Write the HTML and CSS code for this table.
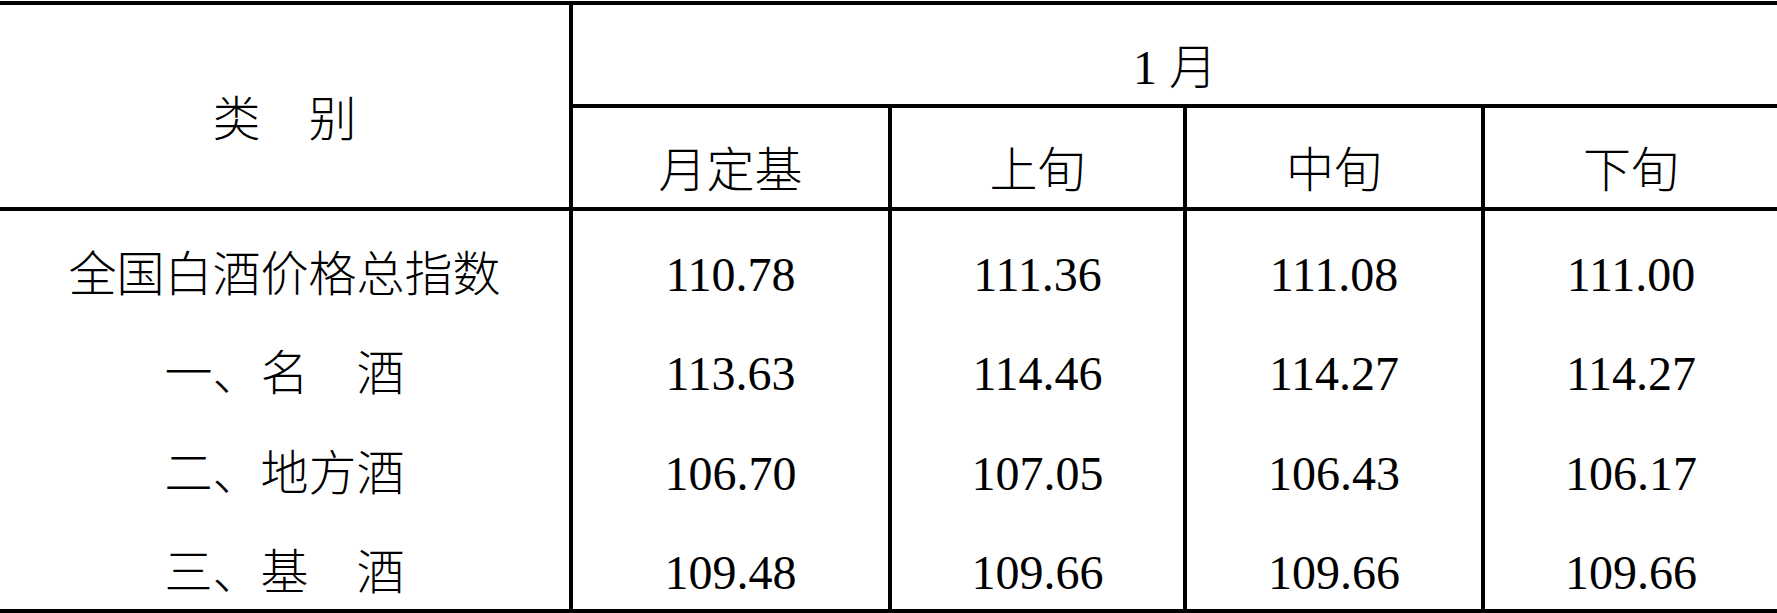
FILE: index.html
```html
<!DOCTYPE html>
<html lang="zh-CN">
<head>
<meta charset="utf-8">
<title>全国白酒价格指数</title>
<link rel="stylesheet" href="styles.css">
</head>
<body>
<table class="idx">
  <colgroup>
    <col class="c1"><col class="c2"><col class="c3"><col class="c4"><col class="c5">
  </colgroup>
  <thead>
    <tr class="h1">
      <th class="cat vr" rowspan="2">类　别</th>
      <th class="month" colspan="4">1 月</th>
    </tr>
    <tr class="h2">
      <th class="sub vr">月定基</th>
      <th class="sub vr">上旬</th>
      <th class="sub vr">中旬</th>
      <th class="sub">下旬</th>
    </tr>
  </thead>
  <tbody>
    <tr>
      <td class="lbl vr">全国白酒价格总指数</td>
      <td class="num vr">110.78</td>
      <td class="num vr">111.36</td>
      <td class="num vr">111.08</td>
      <td class="num">111.00</td>
    </tr>
    <tr>
      <td class="lbl vr">一、名　酒</td>
      <td class="num vr">113.63</td>
      <td class="num vr">114.46</td>
      <td class="num vr">114.27</td>
      <td class="num">114.27</td>
    </tr>
    <tr>
      <td class="lbl vr">二、地方酒</td>
      <td class="num vr">106.70</td>
      <td class="num vr">107.05</td>
      <td class="num vr">106.43</td>
      <td class="num">106.17</td>
    </tr>
    <tr>
      <td class="lbl vr">三、基　酒</td>
      <td class="num vr">109.48</td>
      <td class="num vr">109.66</td>
      <td class="num vr">109.66</td>
      <td class="num">109.66</td>
    </tr>
  </tbody>
</table>
</body>
</html>
```
FILE: styles.css
```css
html, body {
  margin: 0;
  padding: 0;
  background: #ffffff;
}

body {
  padding-top: 1px;
}

.idx {
  width: 1777px;
  table-layout: fixed;
  border-collapse: separate;
  border-spacing: 0;
  border-top: 4px solid #000;
  border-bottom: 4px solid #000;
  color: #000;
  font-family: "Liberation Serif", "Noto Sans CJK SC", serif;
}

.c1 { width: 573px; }
.c2 { width: 319px; }
.c3 { width: 295px; }
.c4 { width: 298px; }
.c5 { width: 292px; }

.idx th,
.idx td {
  box-sizing: border-box;
  padding: 27px 0 0 0;
  text-align: center;
  vertical-align: middle;
  font-weight: 300;
  line-height: 1.15;
  white-space: nowrap;
}

.vr {
  border-right: 4px solid #000;
}

.cat {
  border-bottom: 4px solid #000;
  font-size: 48px;
}

.month {
  height: 103px;
  border-bottom: 4px solid #000;
  font-size: 48px;
}

.sub {
  height: 103px;
  border-bottom: 4px solid #000;
  font-size: 48px;
}

.idx tbody td {
  height: 99.5px;
}

.lbl {
  font-size: 48px;
}

.num {
  font-size: 48px;
  font-weight: 400;
}
```
